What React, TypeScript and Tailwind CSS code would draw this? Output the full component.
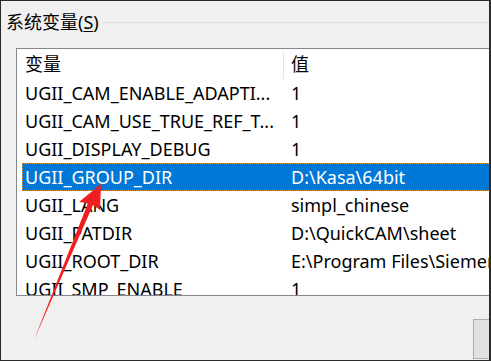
import React from "react";

const rows: [string, string][] = [
  ["UGII_CAM_ENABLE_ADAPTI...", "1"],
  ["UGII_CAM_USE_TRUE_REF_T...", "1"],
  ["UGII_DISPLAY_DEBUG", "1"],
  ["UGII_GROUP_DIR", "D:\\Kasa\\64bit"],
  ["UGII_LANG", "simpl_chinese"],
  ["UGII_PATDIR", "D:\\QuickCAM\\sheet"],
  ["UGII_ROOT_DIR", "E:\\Program Files\\Siemens\\NX"],
  ["UGII_SMP_ENABLE", "1"],
];

export default function App() {
  return (
    <div
      className="relative w-[491px] h-[361px] overflow-hidden bg-[#f0f0f0] border-t border-l border-b border-r-2 border-[#2a2a2a] text-[18px] text-black"
      style={{ fontFamily: '"Noto Sans", "Noto Sans CJK SC", sans-serif' }}
    >
      {/* group header */}
      <div className="flex items-center h-[42px] pl-[5px]">
        <span className="leading-none pb-[1px]">
          系统变量(<span className="underline underline-offset-2">S</span>)
        </span>
        <div className="flex-1 h-px bg-[#dcdcdc] ml-[4px]" />
      </div>
      {/* list box */}
      <div className="ml-[15px] mt-[5px] w-[500px] h-[248px] bg-white border border-[#828790] overflow-hidden pl-[5px]">
        <div className="flex h-[30px] items-center">
          <div className="w-[262px] shrink-0 pl-[3px] relative h-full flex items-center">
            变量
            <div className="absolute right-0 top-[3px] bottom-[0px] w-px bg-[#e5e5e5]" />
          </div>
          <div className="pl-[7px]">值</div>
        </div>
        {rows.map(([k, v], i) => {
          const sel = i === 3;
          return (
            <div
              key={k}
              className={
                "flex h-[28px] items-center whitespace-nowrap " +
                (sel ? "bg-[#0078d7] text-white outline-1 outline-dotted outline-[#e8a040] -outline-offset-1" : "")
              }
            >
              <div className="w-[262px] shrink-0 pl-[3px]">{k}</div>
              <div className="pl-[7px] shrink-0">{v}</div>
            </div>
          );
        })}
      </div>
      {/* button at bottom right */}
      <div className="absolute left-[472px] top-[318px] w-[40px] h-[40px] bg-[#e1e1e1] border border-[#adadad]" />
      {/* red arrow */}
      <svg className="absolute left-0 top-0" width="491" height="361" viewBox="0 0 491 361">
        <path d="M100 183 L78 201 L87 202 L33 339 L92 204 L99 209 Z" fill="#f01e1e" />
      </svg>
    </div>
  );
}
